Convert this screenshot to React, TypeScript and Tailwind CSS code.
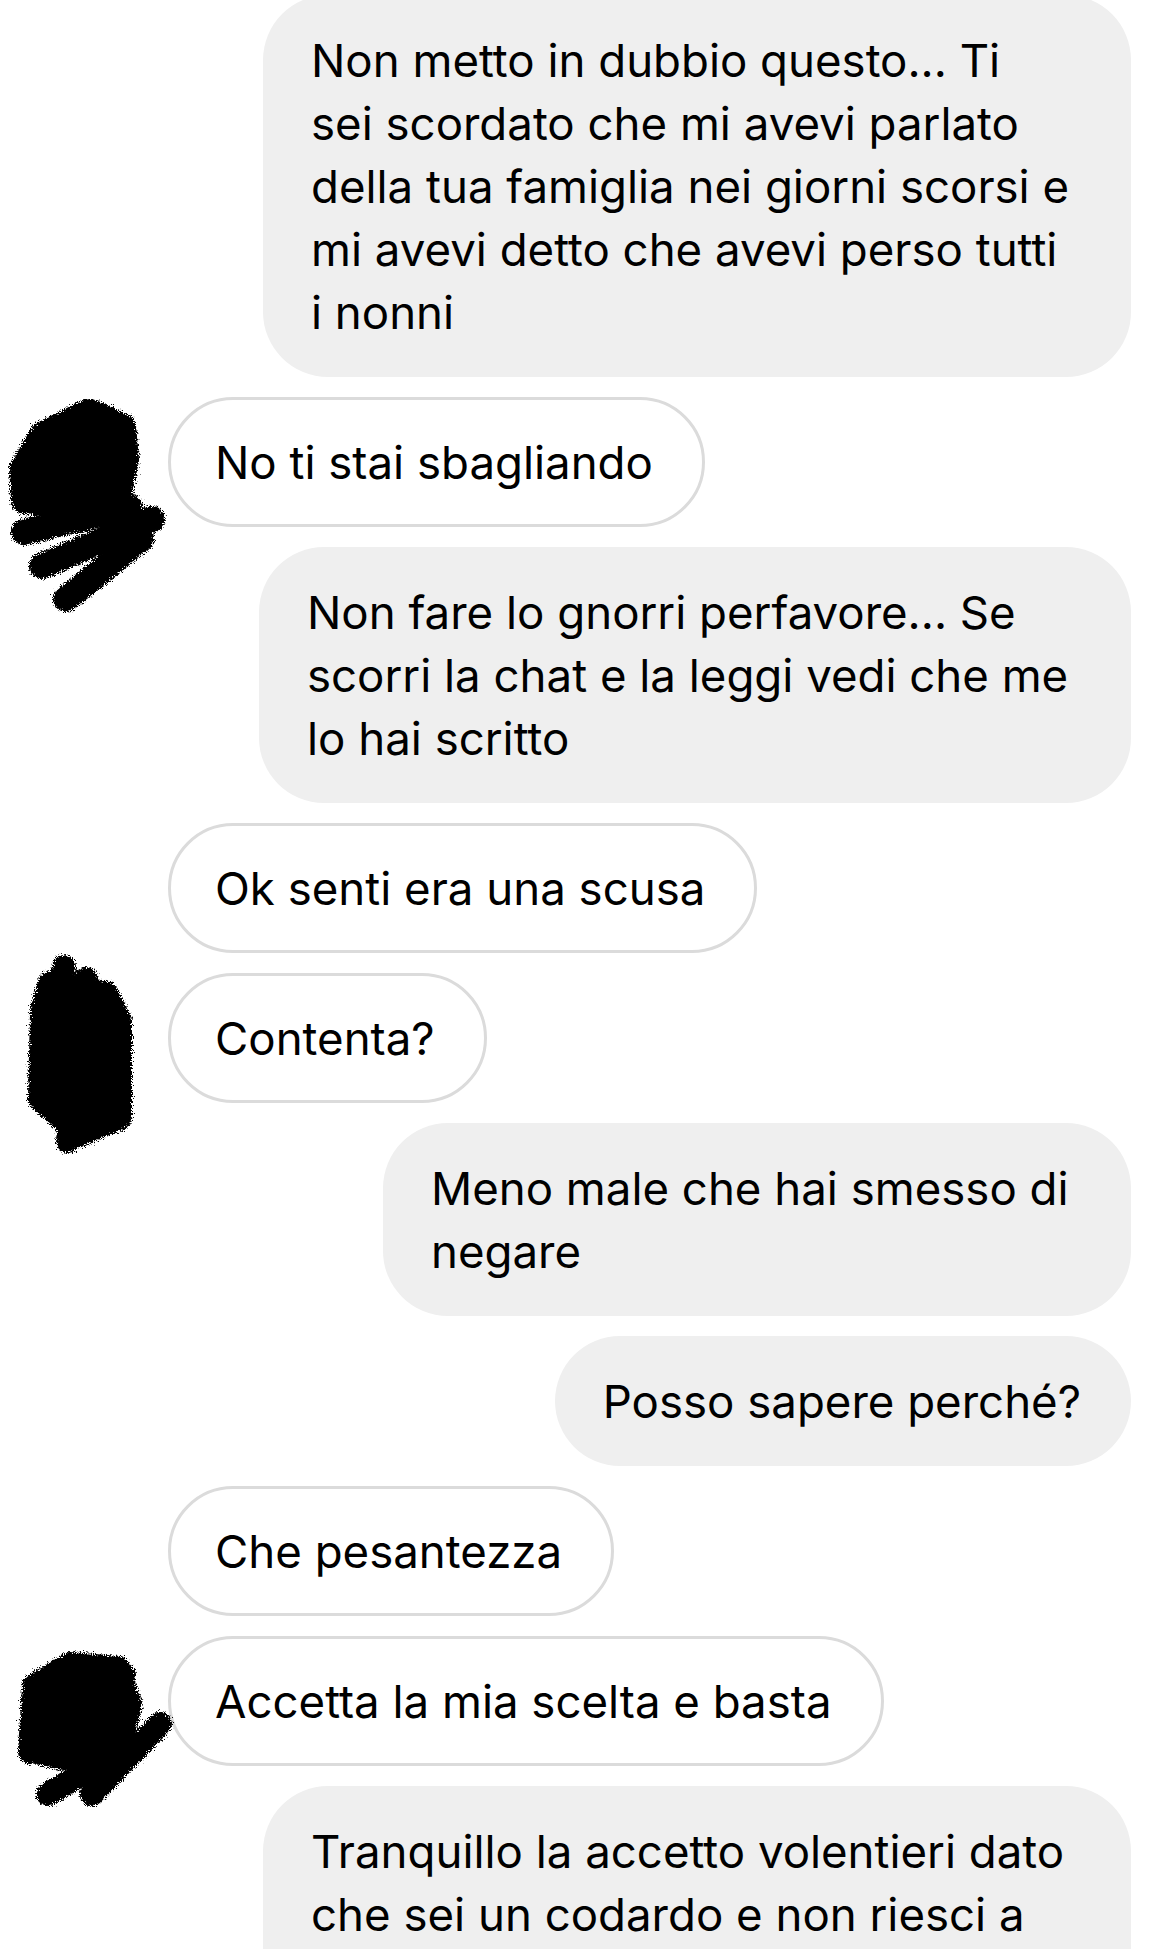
import React from 'react';

type Msg = {
  side: 'in' | 'out';
  lines: string[];
  width?: string;
  avatar?: 1 | 2 | 3;
};

const messages: Msg[] = [
  {
    side: 'out',
    width: 'w-[868px]',
    lines: [
      'Non metto in dubbio questo... Ti',
      'sei scordato che mi avevi parlato',
      'della tua famiglia nei giorni scorsi e',
      'mi avevi detto che avevi perso tutti',
      'i nonni',
    ],
  },
  { side: 'in', lines: ['No ti stai sbagliando'], avatar: 1 },
  {
    side: 'out',
    width: 'w-[872px]',
    lines: ['Non fare lo gnorri perfavore... Se', 'scorri la chat e la leggi vedi che me', 'lo hai scritto'],
  },
  { side: 'in', lines: ['Ok senti era una scusa'] },
  { side: 'in', lines: ['Contenta?'], avatar: 2 },
  { side: 'out', width: 'w-[748px]', lines: ['Meno male che hai smesso di', 'negare'] },
  { side: 'out', lines: ['Posso sapere perché?'] },
  { side: 'in', lines: ['Che pesantezza'] },
  { side: 'in', lines: ['Accetta la mia scelta e basta'], avatar: 3 },
  {
    side: 'out',
    width: 'w-[868px]',
    lines: ['Tranquillo la accetto volentieri dato', 'che sei un codardo e non riesci a', 'dirmi la verità'],
  },
];

const Rough = ({ id }: { id: string }) => (
  <filter id={id} x="-20%" y="-20%" width="140%" height="140%">
    <feTurbulence type="fractalNoise" baseFrequency="0.9" numOctaves="2" seed="3" />
    <feDisplacementMap in="SourceGraphic" scale="10" xChannelSelector="R" yChannelSelector="G" />
  </filter>
);

// redaction scribbles drawn over the avatars
const Scribble = ({ n }: { n: 1 | 2 | 3 }) => {
  if (n === 1) {
    return (
      <svg className="absolute left-[-160px] top-[2px] w-[160px] h-[215px]" viewBox="0 0 160 215">
        <defs><Rough id="r1" /></defs>
        <g filter="url(#r1)" fill="#050505" stroke="#050505" strokeWidth="26" strokeLinecap="round" strokeLinejoin="round">
          <polygon points="82,12 115,28 118,60 112,92 60,106 16,102 14,70 34,36" />
          <line x1="16" y1="133" x2="122" y2="108" />
          <line x1="34" y1="167" x2="144" y2="120" />
          <line x1="58" y1="200" x2="133" y2="140" />
        </g>
      </svg>
    );
  }
  if (n === 2) {
    return (
      <svg className="absolute left-[-148px] top-[-24px] w-[120px] h-[210px]" viewBox="0 0 120 210">
        <defs><Rough id="r2" /></defs>
        <g filter="url(#r2)" fill="#050505" stroke="#050505" strokeWidth="24" strokeLinecap="round" strokeLinejoin="round">
          <polygon points="30,34 86,44 100,72 100,168 60,186 20,150 22,62" />
          <line x1="44" y1="18" x2="20" y2="150" />
          <line x1="66" y1="30" x2="48" y2="192" />
          <line x1="88" y1="52" x2="92" y2="172" />
          <line x1="98" y1="76" x2="98" y2="170" />
        </g>
      </svg>
    );
  }
  return (
    <svg className="absolute left-[-158px] top-[8px] w-[165px] h-[170px]" viewBox="0 0 165 170">
      <defs><Rough id="r3" /></defs>
      <g filter="url(#r3)" fill="#050505" stroke="#050505" strokeWidth="24" strokeLinecap="round" strokeLinejoin="round">
        <polygon points="24,42 60,20 108,24 120,60 112,98 60,116 20,106" />
        <line x1="38" y1="150" x2="113" y2="106" />
        <line x1="82" y1="150" x2="150" y2="80" />
        <line x1="20" y1="108" x2="50" y2="32" />
        <line x1="62" y1="98" x2="80" y2="22" />
        <line x1="104" y1="96" x2="114" y2="32" />
      </g>
    </svg>
  );
};

export default function App() {
  return (
    <div
      className="w-[1167px] h-[1949px] overflow-hidden bg-white text-black"
      style={{ fontFamily: 'Inter, "Noto Sans", sans-serif' }}
    >
      <div className="flex flex-col gap-[20px] mt-[-5px] pr-[36px] pl-[168px]">
        {messages.map((m, i) =>
          m.side === 'out' ? (
            <div key={i} className="flex justify-end">
              <div
                className={`${m.width ?? 'w-fit'} bg-[#efefef] rounded-[65px] pl-[48px] pr-[50px] py-[33.5px] text-[45.6px] leading-[63px] whitespace-nowrap`}
              >
                {m.lines.map((l, j) => (
                  <div key={j}>{l}</div>
                ))}
              </div>
            </div>
          ) : (
            <div key={i} className="relative flex">
              {m.avatar && <Scribble n={m.avatar} />}
              <div className="w-fit border-[3px] border-[#dbdbdb] bg-white rounded-[65px] pl-[44px] pr-[49px] py-[30.5px] text-[45.6px] leading-[63px] whitespace-nowrap">
                {m.lines[0]}
              </div>
            </div>
          )
        )}
      </div>
    </div>
  );
}
